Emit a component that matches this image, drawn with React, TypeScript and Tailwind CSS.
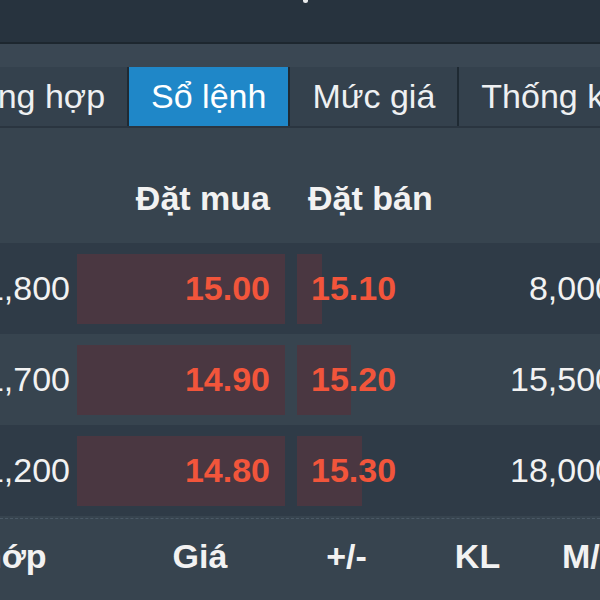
const TABS = [
  { label: 'Tổng hợp', active: false },
  { label: 'Sổ lệnh', active: true },
  { label: 'Mức giá', active: false },
  { label: 'Thống kê', active: false },
];

const BOOK = [
  { bidVol: '1,800', bid: '15.00', ask: '15.10', askBar: 25, askVol: '8,000', dark: true },
  { bidVol: '1,700', bid: '14.90', ask: '15.20', askBar: 54, askVol: '15,500', dark: false },
  { bidVol: '1,200', bid: '14.80', ask: '15.30', askBar: 65, askVol: '18,000', dark: true },
];

const App = () => {
  return (
    <div className="w-[600px] h-[600px] overflow-hidden bg-[#37444f] text-[#f2f2f2] font-['Liberation_Sans',Arial,sans-serif] text-[34px] leading-[39px]">
      {/* Title bar (mostly cut off) */}
      <div className="h-[42px] bg-[#27333e] flex justify-center">
        <span className="ml-[10px] w-[5px] h-[3px] rounded-b-full bg-white/90" />
      </div>
      <div className="h-[2px] bg-[#1d272f]" />

      {/* Tabs */}
      <div className="bg-[#3a4753] pt-[23px]">
        <div className="flex h-[61px] -ml-[64px] bg-[#34414d] border-b-2 border-[#2a3540]">
          {TABS.map((t) => (
            <div
              key={t.label}
              className={`shrink-0 flex items-center px-[22px] border-r-2 border-[#1f2a33] whitespace-nowrap ${
                t.active ? 'bg-[#1f87c8] text-white' : 'text-[#eef0f2]'
              }`}
            >
              {t.label}
            </div>
          ))}
        </div>
      </div>

      {/* Order book */}
      <div className="-ml-[40px] w-[654px]">
        <div className="grid grid-cols-[110px_7px_208px_12px_173px_144px] h-[115px] pt-[51px] font-bold">
          <div />
          <div />
          <div className="text-right pr-[15px] whitespace-nowrap">Đặt mua</div>
          <div />
          <div className="pl-[11px] whitespace-nowrap">Đặt bán</div>
          <div />
        </div>

        {BOOK.map((r) => (
          <div
            key={r.bid}
            className={`grid grid-cols-[110px_7px_208px_12px_173px_144px] h-[91px] items-center ${
              r.dark ? 'bg-[#2f3b47]' : 'bg-[#37444f]'
            }`}
          >
            <div className="text-right whitespace-nowrap">{r.bidVol}</div>
            <div />
            <div className="h-[70px] bg-[#4a3741] flex items-center justify-end pr-[15px] text-[#f2553b] font-bold">
              {r.bid}
            </div>
            <div />
            <div className="relative h-[70px] flex items-center pl-[14px] text-[#f2553b] font-bold">
              <div className="absolute left-0 top-0 h-full bg-[#4a3741]" style={{ width: r.askBar }} />
              <span className="relative">{r.ask}</span>
            </div>
            <div className="text-right whitespace-nowrap">{r.askVol}</div>
          </div>
        ))}
      </div>

      {/* Matched trades header */}
      <div className="mt-[2px] border-t border-dashed border-[#4b5966]" />
      <div className="flex -ml-[97px] pt-[18px] font-bold whitespace-nowrap">
        <div className="w-[197px] shrink-0 text-center">Khớp</div>
        <div className="w-[200px] shrink-0 text-center">Giá</div>
        <div className="w-[93px] shrink-0 text-center">+/-</div>
        <div className="w-[169px] shrink-0 text-center">KL</div>
        <div className="shrink-0">M/B</div>
      </div>
    </div>
  );
};

export default App;
